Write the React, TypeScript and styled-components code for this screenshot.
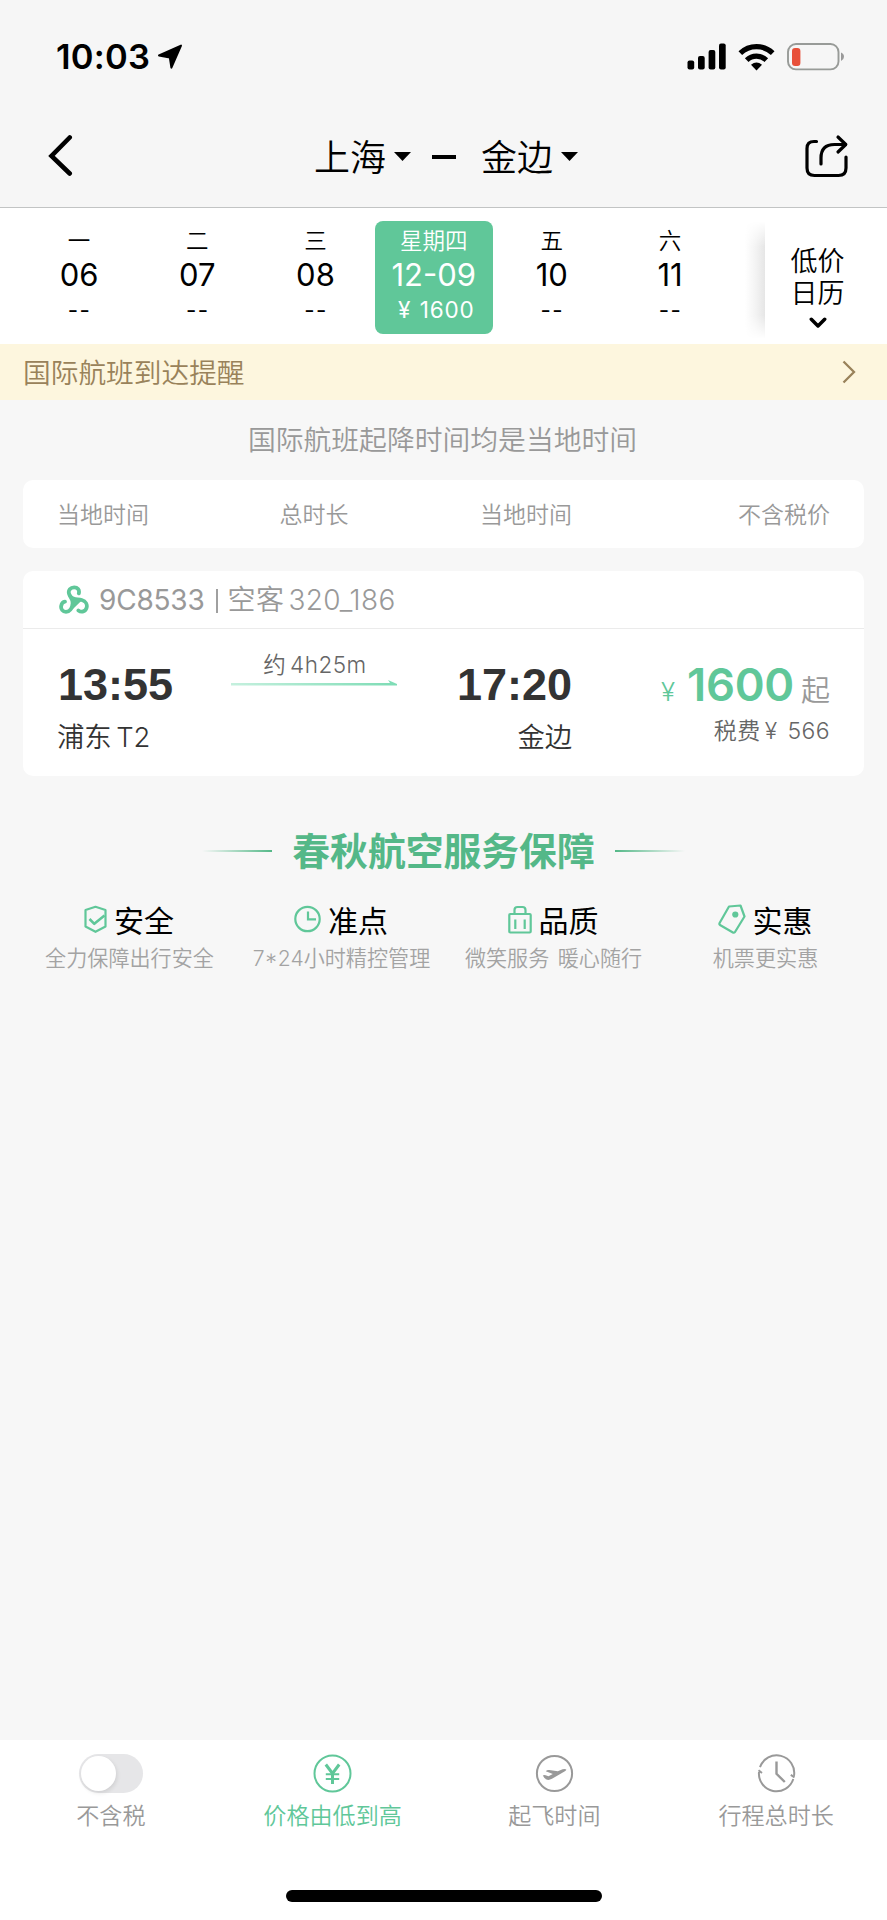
import React from 'react';
import styled, { createGlobalStyle, css } from 'styled-components';

const GREEN = '#60c799';
const CJK = "'Noto Sans CJK SC', sans-serif";
const MIXED = "Inter, 'Noto Sans CJK SC', sans-serif";

const GlobalStyle = createGlobalStyle`
  *, *::before, *::after { box-sizing: border-box; }
  body { margin: 0; background: #f7f7f7; font-family: ${CJK}; font-weight: 350; color: #000; }
  svg { display: block; flex: none; }
`;

const Screen = styled.div`
  width: 887px;
  height: 1920px;
  display: flex;
  flex-direction: column;
  background: #f7f7f7;
  overflow: hidden;
`;

/* ---------- header ---------- */

const Header = styled.header`
  flex: none;
  height: 208px;
  background: #f6f6f6;
  border-bottom: 1px solid #c2c4c4;
`;

const StatusBar = styled.div`
  height: 112px;
  padding: 1px 42px 0 56px;
  display: flex;
  align-items: center;
`;

const Clock = styled.span`
  width: 101px;
  font: 600 34.5px/40px ${MIXED};
  letter-spacing: 0.2px;
`;

const StatusIcons = styled.div`
  margin-left: auto;
  display: flex;
  align-items: center;
  gap: 12px;
`;

const NavBar = styled.nav`
  height: 87px;
  padding: 0 39px 0 48px;
  display: grid;
  grid-template-columns: 266px 1fr 43px;
  align-items: center;
`;

const Route = styled.div`
  display: flex;
  align-items: center;
`;

const City = styled.span`
  display: flex;
  align-items: center;
  gap: 8px;
  font-size: 36px;
  line-height: 48px;
  margin-bottom: 1px;
`;

const RouteDash = styled.span`
  width: 24px;
  height: 4px;
  margin: 2px 25px 0 21px;
  background: #000;
`;

const CaretBox = styled.span`
  padding-top: 3px;
`;

/* ---------- date strip ---------- */

const DateStrip = styled.section`
  flex: none;
  height: 136px;
  padding: 13px 0 0 20px;
  background: #fff;
  display: flex;
`;

const Day = styled.div<{ $active?: boolean }>`
  width: 118.2px;
  height: 113px;
  border-radius: 8px;
  display: flex;
  flex-direction: column;
  align-items: center;
  ${p => p.$active && css`background: ${GREEN}; color: #fff;`}
`;

const Weekday = styled.span`
  font-size: 22.5px;
  line-height: 28px;
  margin-top: 4px;
`;

const DayNumber = styled.span`
  font: 400 31px/36px ${MIXED};
  margin-top: 4px;
`;

const DayPrice = styled.span<{ $active?: boolean }>`
  font: 400 22.5px/30px ${MIXED};
  letter-spacing: ${p => (p.$active ? 0.8 : 1.4)}px;
  word-spacing: 1.5px;
  margin-top: 2px;
  padding-left: ${p => (p.$active ? 5 : 1)}px;
`;

const CalendarShade = styled.div`
  margin-left: auto;
  width: 20px;
  height: 118px;
  background: linear-gradient(to right, #fff, #f4f4f4 50%, #e6e6e6);
  mask-image: linear-gradient(transparent, #000 22%, #000 80%, transparent);
`;

const CalendarButton = styled.div`
  width: 122px;
  padding: 23px 17px 0 0;
  display: flex;
  flex-direction: column;
  align-items: center;
  font-size: 27px;
  line-height: 32px;
  svg { margin-top: 9px; }
`;

/* ---------- notices ---------- */

const Notice = styled.div`
  flex: none;
  height: 56px;
  padding: 0 30px 2px 23px;
  background: #fdf6de;
  color: #99825a;
  display: flex;
  align-items: center;
  justify-content: space-between;
  font-size: 27.7px;
  line-height: 50px;
  svg { margin-top: 2px; }
`;

const LocalTimeHint = styled.p`
  flex: none;
  margin: 0;
  height: 80px;
  padding-right: 2px;
  line-height: 77px;
  text-align: center;
  font-size: 27.8px;
  color: #999;
`;

/* ---------- cards ---------- */

const Card = styled.section`
  flex: none;
  width: 841px;
  margin: 0 23px 23px;
  border-radius: 10px;
  background: #fff;
`;

const Columns = styled.div`
  display: grid;
  grid-template-columns: 174px 166px 175px 258px;
  padding-left: 34px;
`;

const HeadColumns = styled(Columns)`
  height: 68px;
  align-items: center;
  font-size: 23px;
  color: #999;
  padding-bottom: 3px;
`;

const Cell = styled.div<{ $align: 'flex-start' | 'center' | 'flex-end' }>`
  display: flex;
  flex-direction: column;
  align-items: ${p => p.$align};
`;

const FlightTitle = styled.div`
  height: 58px;
  padding-left: 36px;
  border-bottom: 1px solid #ebebeb;
  display: flex;
  align-items: center;
  font: 400 28px/40px ${MIXED};
  color: #999;
`;

const FlightNumber = styled.span`
  margin: 1px 0 0 10px;
  letter-spacing: -0.2px;
`;

const Divider = styled.span`
  margin: 3px 10px 0 11px;
  width: 2px;
  height: 24px;
  background: #a0a0a0;
`;

const Aircraft = styled.span`
  margin-top: 1px;
  font-weight: 350;
  word-spacing: -4px;
  letter-spacing: 0.35px;
`;

const FlightBody = styled(Columns)`
  height: 147px;
  color: #333;
`;

const Time = styled.span`
  margin: 29px 0 0 1px;
  font: 700 45px/54px 'Liberation Sans', sans-serif;
`;

const Airport = styled.span`
  margin-top: 6px;
  font: 350 27.4px/38px ${MIXED};
  word-spacing: -3px;
  letter-spacing: -0.1px;
`;

const Duration = styled.span`
  margin: 22px 0 0 2px;
  font: 350 22.5px/28px ${MIXED};
  letter-spacing: 0.5px;
  word-spacing: -3px;
  color: #666;
`;

const PriceLine = styled.div`
  margin-top: 29px;
  height: 54px;
  display: flex;
  align-items: baseline;
  line-height: 54px;
  color: ${GREEN};
`;

const Yen = styled.span`
  font-family: ${MIXED};
  font-size: 26px;
  margin-right: 12px;
`;

const Amount = styled.span`
  font: 600 45.4px/54px ${MIXED};
  letter-spacing: -0.3px;
`;

const From = styled.span`
  margin-left: 7px;
  font-size: 29px;
  color: #999;
`;

const Tax = styled.span`
  display: flex;
  margin-top: 2px;
  font: 350 23px/34px ${MIXED};
  color: #666;
`;

const TaxLabel = styled.span`
  letter-spacing: 0.5px;
  margin-right: 4px;
`;

const TaxAmount = styled.span`
  letter-spacing: 0.4px;
  word-spacing: 3px;
`;

/* ---------- service guarantee ---------- */

const Guarantee = styled.section`
  flex: 1;
  padding-top: 22px;
`;

const GuaranteeTitle = styled.h2`
  margin: 0;
  height: 56px;
  display: flex;
  align-items: center;
  justify-content: center;
  gap: 20px;
  font-size: 37.8px;
  line-height: 56px;
  font-weight: 700;
  color: #54b888;
`;

const Rule = styled.span<{ $to: 'left' | 'right' }>`
  width: 70px;
  height: 2px;
  margin-top: 3px;
  background: linear-gradient(to ${p => p.$to}, #54b888, rgba(84, 184, 136, 0));
`;

const Promises = styled.div`
  display: grid;
  grid-template-columns: repeat(4, 212px);
  padding: 22px 0 0 23px;
`;

const PromiseItem = styled.div`
  display: flex;
  flex-direction: column;
  align-items: center;
`;

const PromiseName = styled.div`
  display: flex;
  align-items: center;
  gap: 7px;
  font-size: 30px;
  line-height: 40px;
  font-weight: 400;
`;

const PromiseText = styled.div`
  font: 350 21.1px/30px ${MIXED};
  margin: 5px 0 0 1px;
  color: #a3a3a3;
  word-spacing: 2.5px;
`;

/* ---------- bottom bar ---------- */

const Footer = styled.footer`
  flex: none;
  height: 180px;
  background: #fff;
  display: flex;
  flex-direction: column;
  align-items: center;
`;

const Tabs = styled.div`
  width: 100%;
  height: 150px;
  display: grid;
  grid-template-columns: repeat(4, 1fr);
`;

const Tab = styled.div<{ $active?: boolean }>`
  padding-top: 14px;
  display: flex;
  flex-direction: column;
  align-items: center;
  gap: 5px;
  font-size: 23.1px;
  line-height: 32px;
  color: ${p => (p.$active ? GREEN : '#999')};
`;

const Switch = styled.span`
  width: 64px;
  height: 39px;
  padding: 2px;
  border-radius: 20px;
  background: #e6e6e8;
`;

const Knob = styled.span`
  display: block;
  width: 35px;
  height: 35px;
  border-radius: 50%;
  background: #fff;
  box-shadow: 1px 2px 4px rgba(0, 0, 0, 0.1);
`;

const IconBox = styled.span`
  height: 39px;
  display: flex;
  align-items: center;
`;

const HomeIndicator = styled.div`
  width: 316px;
  height: 12px;
  margin-left: 1px;
  border-radius: 6px;
  background: #000;
`;

/* ---------- icons ---------- */

const LocationArrow = () => (
  <svg width="26" height="26" viewBox="0 0 26 26">
    <path d="M24 1.6 14.4 23.6 12.8 13.4 2 11.4Z" fill="#000" stroke="#000" strokeWidth="2" strokeLinejoin="round" />
  </svg>
);

const Signal = () => (
  <svg width="39" height="27" viewBox="0 0 39 27">
    <rect x="0.5" y="17.5" width="6.7" height="9" rx="2" />
    <rect x="11" y="13" width="6.7" height="13.5" rx="2" />
    <rect x="21.6" y="7" width="6.7" height="19.5" rx="2" />
    <rect x="32" y="0.5" width="6.7" height="26" rx="2" />
  </svg>
);

const Wifi = () => (
  <svg width="37" height="28" viewBox="0 0 37 28">
    <g fill="none" stroke="#000" strokeWidth="5.2">
      <path d="M2.3 10.2A23.2 23.2 0 0 1 34.7 10.2" />
      <path d="M8.7 17.2A14 14 0 0 1 28.3 17.2" />
    </g>
    <path d="M18.5 27.5 13 21.8Q18.5 17.2 24 21.8Z" />
  </svg>
);

const Battery = () => (
  <svg width="58" height="28" viewBox="0 0 58 28">
    <rect x="1" y="1" width="50.5" height="25.4" rx="8" fill="none" stroke="#989b98" strokeWidth="1.9" />
    <rect x="5" y="5" width="8.4" height="18" rx="3" fill="#e8503a" />
    <path d="M54 9.5Q57 10.8 57 13.7T54 18Z" fill="#999" />
  </svg>
);

const Back = () => (
  <svg width="25" height="42" viewBox="0 0 25 42">
    <path d="M21.7 2.5 3.5 21 21.7 38.5" fill="none" stroke="#000" strokeWidth="4.6" strokeLinecap="round" />
  </svg>
);

const Caret = () => (
  <svg width="17" height="9" viewBox="0 0 17 9">
    <path d="M0 0H17L8.5 9Z" />
  </svg>
);

const Share = () => (
  <svg width="44" height="44" viewBox="0 0 44 44" fill="none" stroke="#000" strokeWidth="3.2" strokeLinecap="round" strokeLinejoin="round">
    <path d="M11.5 7.5H9Q2 7.5 2 14.5V34Q2 41.5 9.5 41.5H33.5Q41 41.5 41 34V23" />
    <path d="M16 30V24Q16 10.5 29.5 10.5H40.5" />
    <path d="M33 3 40.8 10.5 33 18" />
  </svg>
);

const DownChevron = () => (
  <svg width="18" height="12" viewBox="0 0 18 12">
    <path d="M2.3 2.3 9 9 15.7 2.3" fill="none" stroke="#000" strokeWidth="3.5" strokeLinecap="round" strokeLinejoin="round" />
  </svg>
);

const RightChevron = () => (
  <svg width="16" height="24" viewBox="0 0 16 24">
    <path d="M2.5 1.5 13 12 2.5 22.5" fill="none" stroke="#99825a" strokeWidth="2.3" />
  </svg>
);

const AirlineLogo = () => (
  <svg width="30" height="30" viewBox="0 0 30 30" fill="none" stroke={GREEN} strokeWidth="3.8" strokeLinecap="round">
    <path d="M19.8 8.4C20.8 4.6 18.4 2.3 15.2 2.3C11.4 2.3 9 5.2 10 8.6C11 12 14 14 13.6 18.5C13.2 23.5 10.5 26.8 7 26.8C3.8 26.8 1.6 24.2 2.2 20.8C2.6 18.4 4 16.8 6 16.6" />
    <path d="M11.5 11.5C14 15.2 18.5 13.8 22.8 15C26.8 16.2 28.5 19.6 27.6 22.8C26.5 26.6 22.5 27.8 19.4 25.4" />
    <path d="M13 12.5 20.5 16.3 14 22.5Z" fill={GREEN} strokeWidth="2" />
  </svg>
);

const FlightLine = () => (
  <svg width="166" height="8" viewBox="0 0 166 8">
    <defs>
      <linearGradient id="flightLine" x1="0" x2="1">
        <stop offset="0" stopColor="#c5f0de" />
        <stop offset="1" stopColor="#7ddcb5" />
      </linearGradient>
    </defs>
    <path d="M0 4H159L157 1 166 5V6.6H0Z" fill="url(#flightLine)" />
  </svg>
);

const Shield = () => (
  <svg width="23" height="28" viewBox="0 0 23 28" fill="none" stroke={GREEN} strokeWidth="2.2" strokeLinejoin="round">
    <path d="M11.5 1.8 21.5 5V21.5L11.5 26.8 1.5 21.5V5Z" />
    <path d="M5.5 14 10.3 18.8 20.5 10.5" strokeWidth="2.6" />
  </svg>
);

const ClockIcon = () => (
  <svg width="27" height="28" viewBox="0 0 27 28" fill="none" stroke={GREEN} strokeWidth="2.2">
    <circle cx="13.5" cy="14" r="12.2" />
    <path d="M14 6.5V14.3H22" />
  </svg>
);

const Bag = () => (
  <svg width="24" height="29" viewBox="0 0 24 29" fill="none" stroke={GREEN} strokeWidth="2.2" strokeLinejoin="round">
    <rect x="1.3" y="9" width="21.4" height="18.5" rx="1" />
    <path d="M6.5 9V5Q6.5 2 9.5 2H14.5Q17.5 2 17.5 5V9M7.3 14.5V24M16.7 14.5V24" />
  </svg>
);

const Tag = () => (
  <svg width="28" height="30" viewBox="0 0 28 30" fill="none" stroke={GREEN} strokeWidth="2.2" strokeLinejoin="round">
    <path d="M11 2.5 22.5 1.5 26.5 12.5 17 28Q16 29 14.5 28.2L2 21Q1 20.2 1.6 19Z" />
    <circle cx="17.3" cy="10.5" r="3.1" fill={GREEN} stroke="none" />
  </svg>
);

const YenIcon = () => (
  <svg width="39" height="39" viewBox="0 0 39 39" fill="none" stroke={GREEN}>
    <circle cx="19.5" cy="19.5" r="18" strokeWidth="2" />
    <path d="M12.8 10.5 19.5 19.5 26.2 10.5M19.5 19V30" strokeWidth="3" />
    <path d="M12.8 20.2H26.2M12.8 25H26.2" strokeWidth="2" />
  </svg>
);

const PlaneIcon = () => (
  <svg width="39" height="39" viewBox="0 0 39 39">
    <circle cx="19.5" cy="19.5" r="17.6" fill="none" stroke="#999" strokeWidth="2" />
    <path
      d="M7.8 21.5Q9.3 20.6 10.6 21.2L13.5 22.2 17.8 20 10.8 17.2Q12 15.8 14.2 16.1L22.8 17.2 27.6 15.3Q30.5 14.5 31.2 15.4Q31.8 16.4 29.5 17.6L17 24.8Q13.8 26.6 11.5 25.6Q9.3 24.6 7.8 21.5Z"
      fill="#999"
    />
  </svg>
);

const DurationIcon = () => (
  <svg width="39" height="39" viewBox="0 0 39 39" fill="none" stroke="#999" strokeWidth="2">
    <path d="M3 13.2A17.6 17.6 0 0 1 37 21.8M36.3 25A17.6 17.6 0 0 1 2 18" />
    <path d="M1.5 16.3 5 19M33.8 20.8 37.5 23.3" />
    <path d="M19.5 7.5V19.8L27.8 28" strokeWidth="2.4" />
  </svg>
);

/* ---------- data ---------- */

const days = [
  { weekday: '一', date: '06', price: '--' },
  { weekday: '二', date: '07', price: '--' },
  { weekday: '三', date: '08', price: '--' },
  { weekday: '星期四', date: '12-09', price: '¥ 1600', active: true },
  { weekday: '五', date: '10', price: '--' },
  { weekday: '六', date: '11', price: '--' },
];

const promises = [
  { icon: <Shield />, name: '安全', text: '全力保障出行安全' },
  { icon: <ClockIcon />, name: '准点', text: '7*24小时精控管理' },
  { icon: <Bag />, name: '品质', text: '微笑服务 暖心随行' },
  { icon: <Tag />, name: '实惠', text: '机票更实惠' },
];

export default function App() {
  return (
    <>
      <GlobalStyle />
      <Screen>
        <Header>
          <StatusBar>
            <Clock>10:03</Clock>
            <LocationArrow />
            <StatusIcons>
              <Signal />
              <Wifi />
              <Battery />
            </StatusIcons>
          </StatusBar>
          <NavBar>
            <Back />
            <Route>
              <City>上海<CaretBox><Caret /></CaretBox></City>
              <RouteDash />
              <City>金边<CaretBox><Caret /></CaretBox></City>
            </Route>
            <Share />
          </NavBar>
        </Header>

        <DateStrip>
          {days.map(d => (
            <Day key={d.date} $active={d.active}>
              <Weekday>{d.weekday}</Weekday>
              <DayNumber>{d.date}</DayNumber>
              <DayPrice $active={d.active}>{d.price}</DayPrice>
            </Day>
          ))}
          <CalendarShade />
          <CalendarButton>
            <span>低价</span>
            <span>日历</span>
            <DownChevron />
          </CalendarButton>
        </DateStrip>

        <Notice>
          <span>国际航班到达提醒</span>
          <RightChevron />
        </Notice>
        <LocalTimeHint>国际航班起降时间均是当地时间</LocalTimeHint>

        <Card>
          <HeadColumns>
            <Cell $align="flex-start">当地时间</Cell>
            <Cell $align="center">总时长</Cell>
            <Cell $align="flex-end">当地时间</Cell>
            <Cell $align="flex-end">不含税价</Cell>
          </HeadColumns>
        </Card>

        <Card>
          <FlightTitle>
            <AirlineLogo />
            <FlightNumber>9C8533</FlightNumber>
            <Divider />
            <Aircraft>空客 320_186</Aircraft>
          </FlightTitle>
          <FlightBody>
            <Cell $align="flex-start">
              <Time>13:55</Time>
              <Airport>浦东 T2</Airport>
            </Cell>
            <Cell $align="center">
              <Duration>约 4h25m</Duration>
              <FlightLine />
            </Cell>
            <Cell $align="flex-end">
              <Time>17:20</Time>
              <Airport>金边</Airport>
            </Cell>
            <Cell $align="flex-end">
              <PriceLine>
                <Yen>¥</Yen>
                <Amount>1600</Amount>
                <From>起</From>
              </PriceLine>
              <Tax>
                <TaxLabel>税费</TaxLabel>
                <TaxAmount>¥ 566</TaxAmount>
              </Tax>
            </Cell>
          </FlightBody>
        </Card>

        <Guarantee>
          <GuaranteeTitle>
            <Rule $to="left" />
            春秋航空服务保障
            <Rule $to="right" />
          </GuaranteeTitle>
          <Promises>
            {promises.map(p => (
              <PromiseItem key={p.name}>
                <PromiseName>{p.icon}{p.name}</PromiseName>
                <PromiseText>{p.text}</PromiseText>
              </PromiseItem>
            ))}
          </Promises>
        </Guarantee>

        <Footer>
          <Tabs>
            <Tab><Switch><Knob /></Switch>不含税</Tab>
            <Tab $active><IconBox><YenIcon /></IconBox>价格由低到高</Tab>
            <Tab><IconBox><PlaneIcon /></IconBox>起飞时间</Tab>
            <Tab><IconBox><DurationIcon /></IconBox>行程总时长</Tab>
          </Tabs>
          <HomeIndicator />
        </Footer>
      </Screen>
    </>
  );
}
